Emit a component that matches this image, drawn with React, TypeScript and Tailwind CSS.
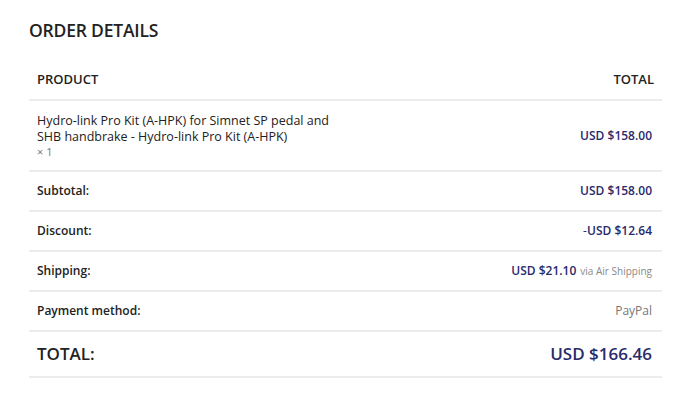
const rows = [
  { label: 'Subtotal:', value: 'USD $158.00' },
  { label: 'Discount:', value: 'USD $12.64', prefix: '-' },
  { label: 'Shipping:', value: 'USD $21.10', note: 'via Air Shipping' },
  { label: 'Payment method:', plain: 'PayPal' },
]

export default function App() {
  return (
    <div className="min-h-screen bg-white px-[29px] pt-[18px] text-[#222] font-['Open_Sans',sans-serif]">
      <h2 className="text-[17.5px] font-semibold leading-[24px] tracking-[-0.2px]">ORDER DETAILS</h2>

      <div className="mt-[15px] w-[633px]">
        {/* header */}
        <div className="flex items-center justify-between h-[44px] pl-2 pr-2 pt-[3px] border-b-2 border-[#ececec] text-[13px] font-semibold">
          <span>PRODUCT</span>
          <span>TOTAL</span>
        </div>

        {/* line item */}
        <div className="flex items-center justify-between h-[71px] pl-2 pr-[10px] border-b-2 border-[#ececec]">
          <div className="w-[292px] text-[12.5px] leading-[15.5px] pt-[2px]">
            Hydro-link Pro Kit (A-HPK) for Simnet SP pedal and SHB handbrake - Hydro-link Pro Kit (A-HPK)
            <div className="text-[#777] text-[11px]">× 1</div>
          </div>
          <span className="text-[12px] font-semibold text-[#2a2a6b]">USD $158.00</span>
        </div>

        {rows.map(r => (
          <div key={r.label} className="flex items-center justify-between h-[40px] pl-2 pr-[10px] border-b-2 border-[#ececec]">
            <span className="text-[12px] font-semibold">{r.label}</span>
            {r.plain ? (
              <span className="text-[12px] text-[#777]">{r.plain}</span>
            ) : (
              <span className="text-[12px] font-semibold text-[#2a2a6b]">
                {r.prefix && <span className="font-normal">{r.prefix}</span>}
                {r.value}
                {r.note && <span className="ml-1 text-[10px] font-normal text-[#888]">{r.note}</span>}
              </span>
            )}
          </div>
        ))}

        {/* grand total */}
        <div className="flex items-center justify-between h-[46px] pl-2 pr-[10px] border-b-2 border-[#ececec]">
          <span className="text-[17px] font-semibold">TOTAL:</span>
          <span className="text-[17px] font-semibold text-[#2a2a6b]">USD $166.46</span>
        </div>
      </div>
    </div>
  )
}
